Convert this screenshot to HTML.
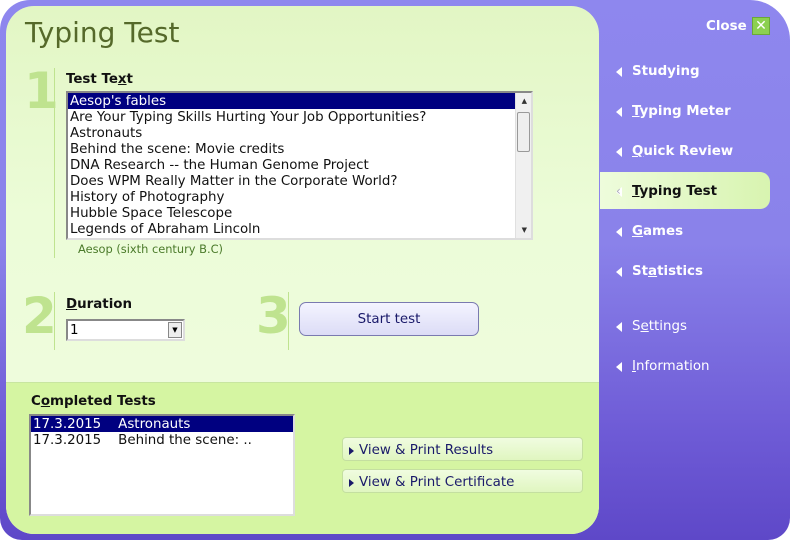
<!DOCTYPE html>
<html><head><style>
*{margin:0;padding:0;box-sizing:border-box}
body{width:790px;height:540px;overflow:hidden;font-family:"DejaVu Sans","Liberation Sans",sans-serif;background:#fff}
#frame{position:absolute;left:0;top:0;width:790px;height:540px;border-radius:30px 40px 22px 22px;background:linear-gradient(180deg,#8e87ee 0%,#8a82ea 45%,#6e5bd6 80%,#5e48c8 100%)}
#main{position:absolute;left:6px;top:6px;width:593px;height:528px;border-radius:28px;background:linear-gradient(180deg,#e2f6c4 0%,#ecfcd8 40%,#eefcdc 70%);overflow:hidden}
#bottom{position:absolute;left:0;top:376px;width:593px;height:152px;background:#d5f5a2;border-top:1px solid #c8e6a0}
.abs{position:absolute}
h1{position:absolute;font-weight:normal;font-size:28px;color:#55692a}
.num{position:absolute;font-size:50px;font-weight:bold;color:#bfe38f}
.vl{position:absolute;width:1px;background:#bfe38f}
.lbl{position:absolute;font-size:13.4px;font-weight:bold;color:#111;transform:translateY(2px)}
.list{position:absolute;background:#fff;border:2px solid;border-color:#888 #ddd #ddd #888;font-size:13.4px;color:#111;padding-top:0}
.list div.i{height:16px;line-height:18px;padding-left:2px;white-space:nowrap}
.sel{background:#000080;color:#fff}
.nav{position:absolute;left:616px;font-size:13.4px;font-weight:bold;color:#fff;transform:translateY(1px)}
.nav:before{content:"";position:absolute;left:0;top:3px;border-right:6px solid #fff;border-top:5px solid transparent;border-bottom:5px solid transparent}
.nav span{margin-left:16px}
.btn2{position:absolute;left:342px;width:241px;height:24px;border:1px solid #c4dfa0;border-radius:4px;background:linear-gradient(#f0fce0,#e0f6c0);font-size:13.4px;color:#1a1a6a;line-height:25px;padding-left:16px}
.btn2:before{content:"";position:absolute;left:6px;top:9px;border-left:5px solid #1a1a6a;border-top:4px solid transparent;border-bottom:4px solid transparent}
</style></head><body>
<div id="frame"></div>
<div class="abs" style="left:600px;top:172px;width:170px;height:37px;border-radius:0 10px 10px 0;background:linear-gradient(90deg,#eefcdc,#d8f4b0)"></div>
<div id="main">
<div id="bottom"></div>
</div>
<h1 style="left:25px;top:16px">Typing Test</h1>
<div class="num" style="left:24px;top:62px">1</div>
<div class="vl" style="left:54px;top:68px;height:190px"></div>
<div class="lbl" style="left:66px;top:70px">Test Te<u>x</u>t</div>
<div class="list" style="left:66px;top:91px;width:467px;height:149px">
<div class="i sel" style="width:447px">Aesop's fables</div>
<div class="i">Are Your Typing Skills Hurting Your Job Opportunities?</div>
<div class="i">Astronauts</div>
<div class="i">Behind the scene: Movie credits</div>
<div class="i">DNA Research -- the Human Genome Project</div>
<div class="i">Does WPM Really Matter in the Corporate World?</div>
<div class="i">History of Photography</div>
<div class="i">Hubble Space Telescope</div>
<div class="i">Legends of Abraham Lincoln</div>
<div class="abs" style="right:0;top:0;width:16px;height:145px;background:#f0f0f0;border-left:1px solid #e0e0e0"></div>
<div class="abs" style="right:1px;top:19px;width:13px;height:40px;background:#eee;border:1px solid #999;border-radius:2px"></div>
<div class="abs" style="right:4px;top:4px;font-size:7px;color:#333">▲</div>
<div class="abs" style="right:4px;top:133px;font-size:7px;color:#333">▼</div>
</div>
<div class="abs" style="left:78px;top:242px;font-size:11.4px;color:#4a7a2a">Aesop (sixth century B.C)</div>

<div class="num" style="left:22px;top:287px">2</div>
<div class="vl" style="left:54px;top:292px;height:58px"></div>
<div class="lbl" style="left:66px;top:295px"><u>D</u>uration</div>
<div class="abs" style="left:66px;top:319px;width:119px;height:22px;background:#fff;border:2px solid;border-color:#888 #ddd #ddd #888;font-size:13.4px;line-height:20px;padding-left:2px">1
<div class="abs" style="right:1px;top:1px;width:14px;height:16px;background:#eee;border:1px solid #888;font-size:7px;text-align:center;line-height:14px">▼</div></div>
<div class="num" style="left:256px;top:287px">3</div>
<div class="vl" style="left:288px;top:292px;height:58px"></div>
<div class="abs" style="left:299px;top:302px;width:180px;height:34px;border:1px solid #7a7ab0;border-radius:7px;background:linear-gradient(#f4f4ff,#dcdcf6);font-size:13.4px;color:#1a1a6a;text-align:center;line-height:34px">Start test</div>

<div class="lbl" style="left:31px;top:392px">C<u>o</u>mpleted Tests</div>
<div class="list" style="left:29px;top:414px;width:266px;height:102px">
<div class="i sel" style="width:262px">17.3.2015&nbsp;&nbsp;&nbsp;&nbsp;Astronauts</div>
<div class="i">17.3.2015&nbsp;&nbsp;&nbsp;&nbsp;Behind the scene: ..</div>
</div>
<div class="btn2" style="top:437px">View &amp; Print Results</div>
<div class="btn2" style="top:469px">View &amp; Print Certificate</div>

<div class="abs" style="left:706px;top:19px;font-size:13.4px;font-weight:bold;color:#fff">Close</div>
<div class="abs" style="left:752px;top:17px;width:18px;height:18px;background:#8cd050;border:1px solid #6aa838;color:#fff;font-size:14px;font-weight:bold;text-align:center;line-height:16px">✕</div>
<div class="nav" style="top:63px"><span>Studying</span></div>
<div class="nav" style="top:103px"><span><u>T</u>yping Meter</span></div>
<div class="nav" style="top:143px"><span><u>Q</u>uick Review</span></div>
<div class="nav" style="top:183px;color:#111"><span><u>T</u>yping Test</span></div>
<div class="abs" style="left:616px;top:184px;font-size:12px;color:#aab">‹</div>
<div class="nav" style="top:223px"><span><u>G</u>ames</span></div>
<div class="nav" style="top:263px"><span>St<u>a</u>tistics</span></div>
<div class="nav" style="top:318px;font-weight:normal"><span>S<u>e</u>ttings</span></div>
<div class="nav" style="top:358px;font-weight:normal"><span><u>I</u>nformation</span></div>
</body></html>
